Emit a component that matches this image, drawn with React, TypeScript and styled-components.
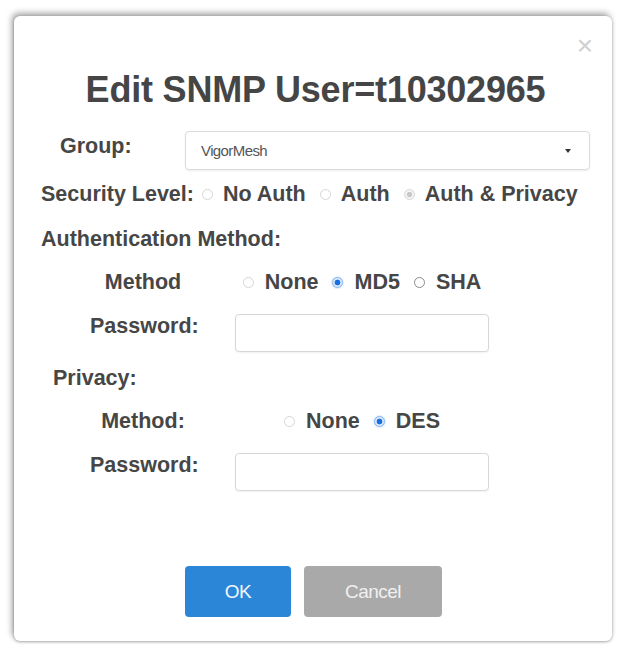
import React from 'react'
import styled, { createGlobalStyle } from 'styled-components'

type RadioState = 'off' | 'on' | 'grayOn' | 'dark'

interface RadioProps {
  state: RadioState
  label: string
}

const GlobalStyle = createGlobalStyle`
  html, body {
    margin: 0;
    padding: 0;
    background: #ffffff;
  }
  body {
    font-family: "Liberation Sans", Arial, sans-serif;
    color: #464646;
  }
`

const Radio = ({ state, label }: RadioProps) => {
  return (
    <RadioLabel>
      <Dot $state={state} />
      <span>{label}</span>
    </RadioLabel>
  )
}

const App = () => {
  return (
    <>
      <GlobalStyle />
      <Page>
        <Dialog>
          <Close>×</Close>
          <Title>Edit SNMP User=t10302965</Title>

          <GroupRow>
            <GroupLabel>Group:</GroupLabel>
            <Select>
              <span>VigorMesh</span>
              <Caret />
            </Select>
          </GroupRow>

          <LevelRow>
            <span className='label'>Security Level:</span>
            <Radio state='off' label='No Auth' />
            <Radio state='off' label='Auth' />
            <Radio state='grayOn' label='Auth & Privacy' />
          </LevelRow>

          <Heading $indent={0} $top={21}>Authentication Method:</Heading>
          <FieldGrid>
            <FieldLabel>Method</FieldLabel>
            <RadioGroup>
              <Radio state='off' label='None' />
              <Radio state='on' label='MD5' />
              <Radio state='dark' label='SHA' />
            </RadioGroup>
            <FieldLabel $raise={7}>Password:</FieldLabel>
            <TextInput type='password' />
          </FieldGrid>

          <Heading $indent={12} $top={14}>Privacy:</Heading>
          <FieldGrid>
            <FieldLabel>Method:</FieldLabel>
            <RadioGroup>
              <Radio state='off' label='None' />
              <Radio state='on' label='DES' />
            </RadioGroup>
            <FieldLabel $raise={7}>Password:</FieldLabel>
            <TextInput type='password' />
          </FieldGrid>

          <Buttons>
            <Button $primary>OK</Button>
            <Button>Cancel</Button>
          </Buttons>
        </Dialog>
      </Page>
    </>
  )
}

const Page = styled.div`
  padding: 16px 6px 5px 14px;
`

const Dialog = styled.div`
  position: relative;
  box-sizing: border-box;
  width: 598px;
  height: 625px;
  padding: 52px 22px 0 27px;
  background: #fff;
  border-radius: 6px;
  box-shadow: -2px -3px 6px rgba(0, 0, 0, 0.35), 0 1px 3px rgba(0, 0, 0, 0.3);
  display: flex;
  flex-direction: column;
`

const Close = styled.span`
  position: absolute;
  top: 16px;
  right: 19px;
  font-size: 28px;
  font-weight: 300;
  color: #d0d0d0;
  line-height: 1;
`

const Title = styled.h1`
  margin: 0 0 19px 0;
  height: 44px;
  font-size: 36px;
  line-height: 44px;
  font-weight: 700;
  color: #454545;
  text-align: center;
  letter-spacing: -0.2px;
`

const GroupRow = styled.div`
  display: flex;
  align-items: center;
  padding-left: 19px;
`

const GroupLabel = styled.span`
  width: 125px;
  font-size: 21.5px;
  font-weight: 700;
  margin-top: -8px;
`

const Select = styled.div`
  flex: 1;
  height: 39px;
  box-sizing: border-box;
  display: flex;
  align-items: center;
  justify-content: space-between;
  padding: 0 18px 0 15px;
  border: 1px solid #dcdcdc;
  border-radius: 4px;
  box-shadow: 0 1px 2px rgba(0, 0, 0, 0.08);
  font-size: 15px;
  color: #555;
  letter-spacing: -0.6px;
`

const Caret = styled.span`
  width: 0;
  height: 0;
  border-left: 3px solid transparent;
  border-right: 3px solid transparent;
  border-top: 4px solid #333;
`

const LevelRow = styled.div`
  display: flex;
  align-items: center;
  margin-top: 12px;
  height: 24px;
  font-size: 21.5px;
  font-weight: 700;
  white-space: nowrap;

  .label {
    margin-right: 8px;
  }
  label {
    gap: 10px;
  }
  label + label {
    margin-left: 14px;
  }
`

const Heading = styled.div<{ $indent: number; $top: number }>`
  margin-top: ${({ $top }) => $top}px;
  padding-left: ${({ $indent }) => $indent}px;
  height: 24px;
  line-height: 24px;
  font-size: 21.5px;
  font-weight: 700;
`

const FieldGrid = styled.div`
  display: grid;
  grid-template-columns: 106px 254px;
  column-gap: 39px;
  row-gap: 20px;
  align-items: center;
  margin-top: 19px;
  padding-left: 49px;
`

const FieldLabel = styled.span<{ $raise?: number }>`
  text-align: center;
  font-size: 21.5px;
  font-weight: 700;
  line-height: 24px;
  margin-bottom: ${({ $raise }) => ($raise ? $raise * 2 : 0)}px;
`

const RadioGroup = styled.div`
  display: flex;
  justify-content: center;
  align-items: center;
  height: 24px;
  font-size: 21.5px;
  font-weight: 700;

  label + label {
    margin-left: 14px;
  }
`

const RadioLabel = styled.label`
  display: inline-flex;
  align-items: center;
  gap: 11px;
  white-space: nowrap;
`

const Dot = styled.span<{ $state: RadioState }>`
  box-sizing: border-box;
  width: 11px;
  height: 11px;
  border-radius: 50%;
  border: 1px solid
    ${({ $state }) =>
      $state === 'on' ? '#7fb4f0' : $state === 'dark' ? '#8a8a8a' : '#d6d6d6'};
  background: ${({ $state }) =>
    $state === 'on'
      ? 'radial-gradient(circle, #1a6fe0 0 2.6px, #dbe9fb 3.2px)'
      : $state === 'grayOn'
      ? 'radial-gradient(circle, #c8c8c8 0 2.4px, #f4f4f4 3px)'
      : '#fff'};
  box-shadow: ${({ $state }) => ($state === 'on' ? '0 0 2px #9cc4f3' : 'none')};
`

const TextInput = styled.input`
  box-sizing: border-box;
  width: 254px;
  height: 38px;
  border: 1px solid #d8d8d8;
  border-radius: 4px;
  box-shadow: 0 1px 2px rgba(0, 0, 0, 0.06);
  outline: none;
`

const Buttons = styled.div`
  display: flex;
  gap: 13px;
  margin-top: 75px;
  padding-left: 144px;
`

const Button = styled.button<{ $primary?: boolean }>`
  height: 51px;
  width: ${({ $primary }) => ($primary ? '106px' : '138px')};
  border: none;
  border-radius: 4px;
  background: ${({ $primary }) => ($primary ? '#2c86d8' : '#a9a9a9')};
  color: ${({ $primary }) => ($primary ? '#f2f7fc' : '#f0f0f0')};
  font-family: "Liberation Sans", Arial, sans-serif;
  font-size: 19px;
  letter-spacing: -0.5px;
  cursor: pointer;
`

export default App
